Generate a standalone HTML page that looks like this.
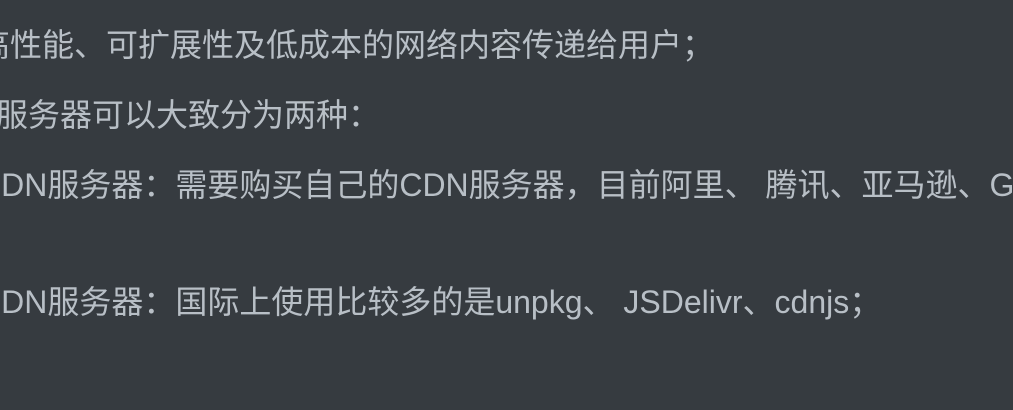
<!DOCTYPE html>
<html><head><meta charset="utf-8"><style>
body{margin:0;width:1013px;height:410px;background:#363b40;overflow:hidden;position:relative;
font-family:"Liberation Sans","Noto Sans CJK SC",sans-serif;font-size:32px;color:#b8bfc6}
div{position:absolute;white-space:nowrap;line-height:40px}
</style></head><body>
<div style="left:-22px;top:25px">高性能、可扩展性及低成本的网络内容传递给用户；</div>
<div style="left:-4px;top:95px">服务器可以大致分为两种：</div>
<div style="left:-22px;top:165px;width:1035px;overflow:hidden">CDN服务器：需要购买自己的CDN服务器，目前阿里、 腾讯、亚马逊、G</div>
<div style="left:-22px;top:282px">CDN服务器：国际上使用比较多的是unpkg、 JSDelivr、cdnjs；</div>
</body></html>
